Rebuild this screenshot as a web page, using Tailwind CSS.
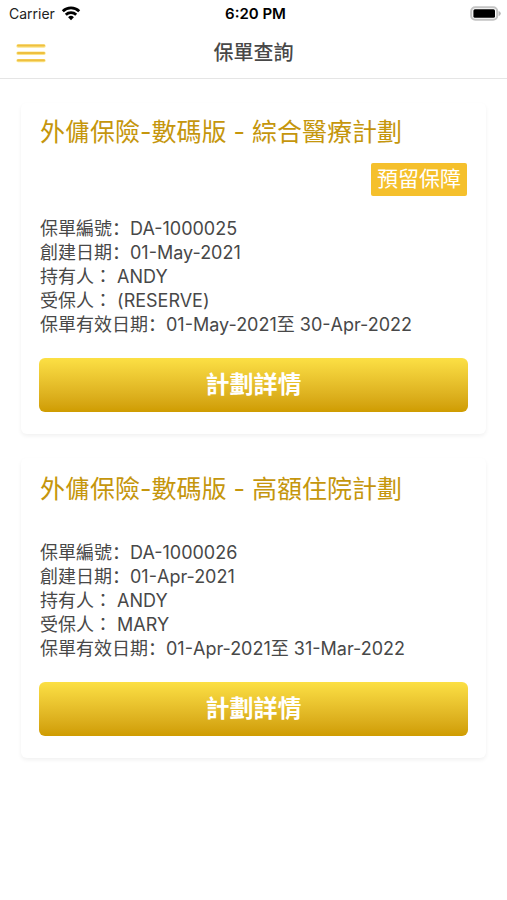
<!DOCTYPE html>
<html lang="zh-Hant">
<head>
  <meta charset="UTF-8" />
  <meta name="viewport" content="width=device-width, initial-scale=1.0"/>
  <title>保單查詢</title>
  <script src="https://cdn.jsdelivr.net/npm/@tailwindcss/browser@4"></script>
</head>
<body class="min-h-screen bg-white font-['Inter','Noto_Sans_CJK_TC',sans-serif] text-[#484848]">
  <!-- status bar -->
  <div class="grid grid-cols-3 items-center h-7 pl-[9px] pr-[5px] text-sm text-black">
    <div class="flex items-center gap-[6px] text-[#222]">
      <span>Carrier</span>
      <svg class="w-5 h-4" viewBox="0 0 20 16" fill="none" stroke="#000" stroke-width="2.8">
        <path d="M1.8 5.2a11.8 11.8 0 0 1 16.4 0" />
        <path d="M4.8 8.8a7.5 7.5 0 0 1 10.4 0" />
        <path d="M10 14.2l-2.9-2.9a4.1 4.1 0 0 1 5.8 0z" fill="#000" stroke="none" />
      </svg>
    </div>
    <span class="text-center text-[15px] font-semibold">6:20 PM</span>
    <svg class="w-8 h-4 justify-self-end" viewBox="0 0 32 16">
      <rect x="1.2" y="1.2" width="26" height="12.6" rx="4" fill="#fff" stroke="#c4c4c4" stroke-width="2" />
      <rect x="3.4" y="3.2" width="21.6" height="8.6" rx="1.5" fill="#000" />
      <path d="M28.6 5v5.2q2.2-.8 2.2-2.6t-2.2-2.6z" fill="#b8b8b8" />
    </svg>
  </div>

  <header class="grid grid-cols-3 items-center h-[51px] px-4 border-b border-[#e5e5e5]">
    <button type="button" aria-label="Menu" class="w-[30px]">
      <svg class="w-[30px] h-5" viewBox="0 0 30 20" stroke-linecap="round">
        <path d="M2 3h26M2 10.3h26M2 17.6h26" stroke="#fbe58a" stroke-width="3.4" />
        <path d="M2 2.6h26M2 9.9h26M2 17.2h26" stroke="#efc03f" stroke-width="2" />
      </svg>
    </button>
    <h1 class="text-center text-xl font-medium">保單查詢</h1>
  </header>

  <main class="px-[21px] pt-6 space-y-6">
    <section class="px-[18px] pt-[11px] pb-[22px] rounded-md shadow-[0_2px_4px_rgba(0,0,0,0.06)]">
      <h2 class="px-px text-[25px] leading-9 text-[#c5960c]">外傭保險-數碼版 - 綜合醫療計劃</h2>
      <div class="flex justify-end mt-[13px] px-px">
        <span class="px-[6px] h-[33px] leading-8 rounded-xs bg-[#f5c02c] text-white text-[21px]">預留保障</span>
      </div>
      <div class="mt-[21px] px-px text-lg leading-[24px]">
        <p>保單編號<span lang="zh-Hans" class="font-['Noto_Sans_CJK_SC'] leading-none">：</span>DA-1000025</p>
        <p>創建日期<span lang="zh-Hans" class="font-['Noto_Sans_CJK_SC'] leading-none">：</span>01-May-2021</p>
        <p>持有人： ANDY</p>
        <p>受保人： (RESERVE)</p>
        <p>保單有效日期<span lang="zh-Hans" class="font-['Noto_Sans_CJK_SC'] leading-none">：</span>01-May-2021至 30-Apr-2022</p>
      </div>
      <button type="button" class="w-full h-[54px] mt-[21px] rounded-md bg-linear-to-b from-[#fce044] to-[#cf9c00] text-white text-2xl font-bold">計劃詳情</button>
    </section>

    <section class="px-[18px] pt-[13px] pb-[22px] rounded-md shadow-[0_2px_4px_rgba(0,0,0,0.06)]">
      <h2 class="px-px text-[25px] leading-9 text-[#c5960c]">外傭保險-數碼版 - 高額住院計劃</h2>
      <div class="mt-[34px] px-px text-lg leading-[24px]">
        <p>保單編號<span lang="zh-Hans" class="font-['Noto_Sans_CJK_SC'] leading-none">：</span>DA-1000026</p>
        <p>創建日期<span lang="zh-Hans" class="font-['Noto_Sans_CJK_SC'] leading-none">：</span>01-Apr-2021</p>
        <p>持有人： ANDY</p>
        <p>受保人： MARY</p>
        <p>保單有效日期<span lang="zh-Hans" class="font-['Noto_Sans_CJK_SC'] leading-none">：</span>01-Apr-2021至 31-Mar-2022</p>
      </div>
      <button type="button" class="w-full h-[54px] mt-[21px] rounded-md bg-linear-to-b from-[#fce044] to-[#cf9c00] text-white text-2xl font-bold">計劃詳情</button>
    </section>
  </main>
</body>
</html>
